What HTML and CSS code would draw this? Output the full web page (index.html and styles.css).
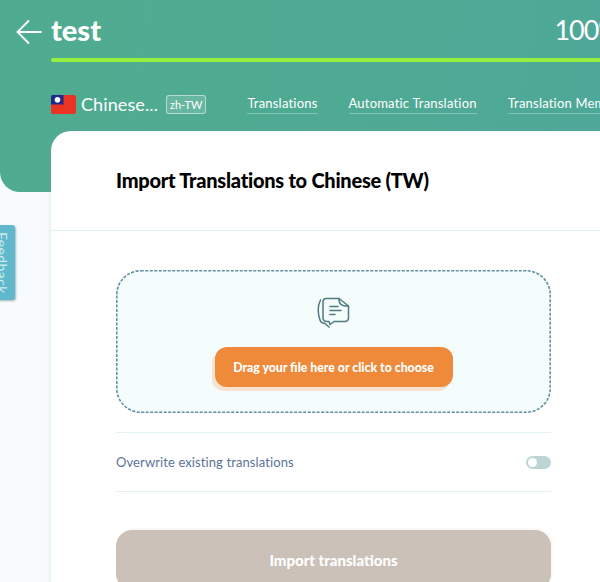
FILE: index.html
```html
<!DOCTYPE html>
<html lang="en">

<head>
  <meta charset="UTF-8">
  <meta name="viewport" content="width=device-width, initial-scale=1.0">
  <title>Import Translations</title>
  <link rel="stylesheet" href="styles.css">
</head>

<body>
  <div class="page">
    <header class="hero">
      <div class="hero-top">
        <a class="back" href="#" aria-label="Back">
          <svg width="26" height="26" viewBox="0 0 26 26" fill="none" stroke="#fff" stroke-width="1.800">
            <path d="M25.500 13H1.500M13 1.500L1.500 13L13 24.500" />
          </svg>
        </a>
        <div class="hero-main">
          <div class="title-row">
            <h1>test</h1>
            <span class="percent">100%</span>
          </div>
          <div class="progress"></div>
        </div>
      </div>
      <div class="lang-row">
        <svg class="flag" width="25" height="19" viewBox="0 0 25 19">
          <rect width="25" height="19" rx="2" fill="#ea3323" />
          <path d="M2 0H12.500V9.500H0V2A2 2 0 0 1 2 0Z" fill="#1c2a8c" />
          <circle cx="6.500" cy="4.800" r="2.800" fill="#fff" />
        </svg>
        <span class="lang-name">Chinese...</span>
        <span class="lang-code">zh-TW</span>
        <nav class="tabs">
          <a href="#">Translations</a>
          <a href="#">Automatic Translation</a>
          <a href="#">Translation Memory</a>
        </nav>
      </div>
    </header>

    <main class="card">
      <h2 class="card-title">Import Translations to Chinese (TW)</h2>
      <div class="card-body">
        <div class="dropzone">
          <svg class="dash-line" width="100%" height="100%" aria-hidden="true">
            <rect />
          </svg>
          <svg class="doc-icon" width="34" height="32" viewBox="0 0 34 32" fill="none" stroke="#4f7a80" stroke-width="1.500" stroke-linecap="round" stroke-linejoin="round">
            <path d="M9 2.500H22L31.500 10V22A3.500 3.500 0 0 1 28 25.500H17L13 28.500L12 25.500H9.500A3.500 3.500 0 0 1 6 22V5.500A3 3 0 0 1 9 2.500Z" />
            <path d="M22 2.500C22 8 24 10 31.500 10" />
            <path d="M3.500 4C0.500 10 1 18 3 24C3.500 26 5 27 8 27.500L12 31" />
            <path d="M13 10.500H21M13 14.500H24M13 18.500H18" />
          </svg>
          <button class="choose-btn" type="button">Drag your file here or click to choose</button>
        </div>
        <div class="option">
          <span>Overwrite existing translations</span>
          <span class="toggle"></span>
        </div>
        <button class="import-btn" type="button">Import translations</button>
      </div>
    </main>

    <a class="feedback" href="#">Feedback</a>
  </div>
</body>

</html>
```

FILE: styles.css
```css
html,
body {
  margin: 0;
  height: 582px;
  overflow: hidden;
}

body {
  font-family: 'Lato', sans-serif;
  background-color: #f7fbfb;
}

.page {
  position: relative;
  width: 616px;
  height: 582px;
  overflow: hidden;
}

.hero {
  height: 192px;
  box-sizing: border-box;
  padding: 12px 0 0 16px;
  color: #fff;
  background: linear-gradient(100deg, #50ac8f, #4ea898);
  border-bottom-left-radius: 20px;
}

.hero-top {
  display: flex;
  gap: 9px;
}

.back {
  display: block;
  height: 26px;
  margin-top: 7px;
}

.hero-main {
  flex: 1;
}

.title-row {
  display: flex;
  justify-content: space-between;
  height: 36px;
  align-items: center;
}

h1 {
  margin: -1px 0 0;
  font-size: 29px;
  font-weight: 900;
}

.percent {
  font-size: 27px;
  letter-spacing: -1px;
  margin-top: -2px;
  margin-right: -3px;
}

.progress {
  height: 4px;
  margin-top: 10px;
  background-color: #93f03f;
  border-radius: 2px;
}

.lang-row {
  display: flex;
  align-items: center;
  margin-top: 31px;
  padding-left: 35px;
  white-space: nowrap;
}

.flag {
  flex: none;
  margin-right: 5px;
}

.lang-name {
  flex: none;
  font-size: 18px;
  letter-spacing: 0.100px;
  margin-right: 8px;
}

.lang-code {
  flex: none;
  font-size: 11px;
  padding: 2px 3px;
  border: 1px solid rgba(255, 255, 255, 0.5);
  background-color: rgba(255, 255, 255, 0.14);
  border-radius: 3px;
}

.tabs {
  flex: none;
  display: flex;
  gap: 31px;
  margin-left: 41px;
}

.tabs a {
  color: #fff;
  font-size: 13px;
  letter-spacing: 0.200px;
  text-decoration: none;
  border-bottom: 1px solid rgba(255, 255, 255, 0.3);
  padding-bottom: 2px;
}

.card {
  position: relative;
  margin: -61px 0 0 51px;
  height: 460px;
  background-color: #fff;
  border-radius: 20px 0 0 0;
  box-shadow: 0 0 4px rgba(120, 160, 170, 0.25);
}

.card-title {
  margin: 0;
  padding: 36px 65px 36px;
  height: 27px;
  line-height: 27px;
  font-size: 20px;
  font-weight: 900;
  letter-spacing: -0.250px;
  color: #000;
  border-bottom: 1px solid #e2eff3;
}

.card-body {
  padding: 39px 65px 0;
}

.dropzone {
  position: relative;
  display: flex;
  flex-direction: column;
  align-items: center;
  box-sizing: border-box;
  height: 143px;
  padding-top: 26px;
  background-color: #f5fcfc;
  border-radius: 24px;
}

.dash-line {
  position: absolute;
  left: 0;
  top: 0;
}

.dash-line rect {
  x: 0.750px;
  y: 0.750px;
  width: calc(100% - 1.500px);
  height: calc(100% - 1.500px);
  rx: 24px;
  fill: none;
  stroke: #648f9e;
  stroke-width: 1.600px;
  stroke-dasharray: 3 1.500;
}

.doc-icon {
  display: block;
}

.choose-btn {
  margin-top: 19px;
  width: 238px;
  height: 40px;
  font-family: inherit;
  font-size: 12.300px;
  font-weight: 900;
  color: #fff;
  background-color: #ef8a3b;
  border: none;
  border-radius: 12px;
  box-shadow: -3px 4px 0 #f8e2d0;
}

.option {
  display: flex;
  justify-content: space-between;
  align-items: center;
  height: 58px;
  margin-top: 19px;
  font-size: 13px;
  letter-spacing: 0.100px;
  color: #5a7398;
  border-top: 1px solid #e2eff3;
  border-bottom: 1px solid #e2eff3;
}

.toggle {
  position: relative;
  width: 25px;
  height: 13px;
  background-color: #bcd6d6;
  border-radius: 7px;
}

.toggle::after {
  content: "";
  position: absolute;
  left: 2px;
  top: 2px;
  width: 9px;
  height: 9px;
  background-color: #fff;
  border-radius: 50%;
}

.import-btn {
  display: block;
  width: 100%;
  height: 60px;
  margin-top: 38px;
  font-family: inherit;
  font-size: 15px;
  font-weight: 900;
  color: #fff;
  background-color: #cbc1b8;
  border: none;
  border-radius: 16px;
  box-shadow: 2px -2px 2px #f9f8f6;
}

.feedback {
  position: absolute;
  left: -10px;
  top: 225px;
  display: block;
  box-sizing: border-box;
  width: 25px;
  height: 75px;
  padding-top: 1px;
  writing-mode: vertical-rl;
  text-align: center;
  line-height: 25px;
  font-size: 14px;
  letter-spacing: 0.400px;
  color: #cfeaf0;
  text-decoration: none;
  background-color: #5fb8cb;
  border-radius: 3px;
  box-shadow: 1px 1px 2px rgba(90, 120, 130, 0.5);
}
```
